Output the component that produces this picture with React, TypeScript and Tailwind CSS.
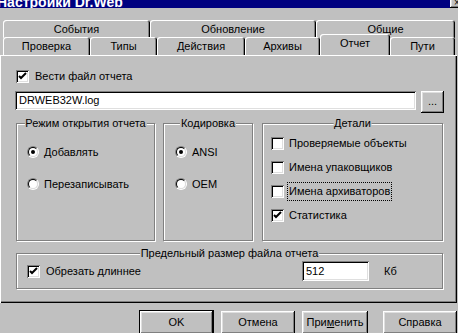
const raised =
    "shadow-[inset_-1px_-1px_0_#000,inset_1px_1px_0_#fff,inset_-2px_-2px_0_#808080,inset_2px_2px_0_#dfdfdf]"
const sunken =
    "shadow-[inset_1px_1px_0_#808080,inset_-1px_-1px_0_#fff,inset_2px_2px_0_#000,inset_-2px_-2px_0_#dfdfdf]"

function Check({ on }: { on?: boolean }) {
    return (
        <div className={`flex h-[13px] w-[13px] shrink-0 items-center justify-center bg-white ${sunken}`}>
            {on && (
                <svg width="9" height="9" viewBox="0 0 9 9">
                    <path d="M1 4 L3 6 L8 1" stroke="#000" strokeWidth="2" fill="none" />
                </svg>
            )}
        </div>
    )
}

function Radio({ on }: { on?: boolean }) {
    return (
        <div className="relative h-[12px] w-[12px] shrink-0 rounded-full border border-t-[#808080] border-l-[#808080] border-r-white border-b-white">
            <div className="flex h-full w-full items-center justify-center rounded-full border border-t-black border-l-black border-r-[#dfdfdf] border-b-[#dfdfdf] bg-white">
                {on && <div className="h-[4px] w-[4px] rounded-full bg-black" />}
            </div>
        </div>
    )
}

function Group({ title, className, children }: { title: string; className: string; children?: React.ReactNode }) {
    return (
        <div className={`relative border border-[#808080] shadow-[1px_1px_0_#fff,inset_1px_1px_0_#fff] ${className}`}>
            <span className="absolute -top-[8px] left-1/2 -translate-x-1/2 whitespace-nowrap bg-[#c0c0c0] px-[1px] leading-[14px]">
                {title}
            </span>
            {children}
        </div>
    )
}

function Tab({ label, w, active }: { label: string; w: string; active?: boolean }) {
    return (
        <div
            className={`flex items-center justify-center rounded-t-[3px] bg-[#c0c0c0] shadow-[inset_1px_1px_0_#fff,inset_-1px_0_0_#000,inset_-2px_0_0_#808080] ${w} ${
                active ? "relative z-10 -mt-[2px] h-[21px] pb-[2px]" : "h-[18px]"
            }`}
        >
            {label}
        </div>
    )
}

function Btn({ label, w, def }: { label: React.ReactNode; w: string; def?: boolean }) {
    return (
        <div className={`flex h-[23px] items-center justify-center ${w} ${def ? "outline outline-1 outline-black" : ""} ${raised}`}>
            {label}
        </div>
    )
}

export default function App() {
    return (
        <div className="relative h-[333px] w-[458px] overflow-hidden bg-[#c0c0c0] text-[11px] text-black font-['Liberation_Sans',Arial,sans-serif]">
            {/* title bar, mostly scrolled off */}
            <div className="flex h-[8px] items-end justify-between overflow-hidden bg-[#000080]">
                <span className="-ml-[3px] mb-[-1px] whitespace-nowrap text-[14px] font-bold leading-[14px] text-white">
                    Настройки Dr.Web
                </span>
                <div className={`mr-[-6px] flex h-[14px] w-[14px] items-end justify-center bg-[#c0c0c0] text-[10px] leading-[10px] ${raised}`}>
                    ×
                </div>
            </div>

            <div className="h-[12px]" />

            {/* tabs */}
            <div className="ml-[3px] flex h-[17px]">
                <Tab label="События" w="w-[147px]" />
                <Tab label="Обновление" w="w-[166px]" />
                <Tab label="Общие" w="w-[139px]" />
            </div>
            <div className="ml-[3px] flex h-[18px] items-end">
                <Tab label="Проверка" w="w-[87px]" />
                <Tab label="Типы" w="w-[67px]" />
                <Tab label="Действия" w="w-[88px]" />
                <Tab label="Архивы" w="w-[75px]" />
                <Tab label="Отчет" w="w-[70px]" active />
                <Tab label="Пути" w="w-[65px]" />
            </div>

            {/* page */}
            <div className="h-[248px] w-[457px] pt-[15px] pl-[16px] shadow-[inset_1px_1px_0_#fff,inset_-1px_-1px_0_#000,inset_-2px_-2px_0_#808080]">
                <div className="flex h-[13px] items-center gap-[6px]">
                    <Check on />
                    <span>Вести файл отчета</span>
                </div>

                <div className="mt-[8px] flex items-start">
                    <div className={`ml-[-1px] flex h-[19px] w-[401px] items-center bg-white pl-[4px] ${sunken}`}>
                        DRWEB32W.log
                    </div>
                    <div className={`ml-[5px] flex h-[22px] w-[23px] items-center justify-center pb-[2px] ${raised}`}>...</div>
                </div>

                <div className="mt-[10px] flex">
                    <Group title="Режим открытия отчета" className="h-[118px] w-[139px]">
                        <div className="mt-[22px] ml-[10px] flex flex-col gap-[20px]">
                            <div className="flex h-[12px] items-center gap-[5px]">
                                <Radio on />
                                <span>Добавлять</span>
                            </div>
                            <div className="flex h-[12px] items-center gap-[5px]">
                                <Radio />
                                <span>Перезаписывать</span>
                            </div>
                        </div>
                    </Group>
                    <Group title="Кодировка" className="ml-[8px] h-[118px] w-[90px]">
                        <div className="mt-[22px] ml-[11px] flex flex-col gap-[20px]">
                            <div className="flex h-[12px] items-center gap-[5px]">
                                <Radio on />
                                <span>ANSI</span>
                            </div>
                            <div className="flex h-[12px] items-center gap-[5px]">
                                <Radio />
                                <span>OEM</span>
                            </div>
                        </div>
                    </Group>
                    <Group title="Детали" className="ml-[9px] h-[118px] w-[181px]">
                        <div className="mt-[13px] ml-[8px] flex flex-col gap-[11px]">
                            <div className="flex h-[13px] items-center gap-[5px]">
                                <Check />
                                <span>Проверяемые объекты</span>
                            </div>
                            <div className="flex h-[13px] items-center gap-[5px]">
                                <Check />
                                <span>Имена упаковщиков</span>
                            </div>
                            <div className="flex h-[13px] items-center gap-[4px]">
                                <Check />
                                <span className="px-[1px] outline outline-1 outline-dotted outline-black">Имена архиваторов</span>
                            </div>
                            <div className="flex h-[13px] items-center gap-[5px]">
                                <Check on />
                                <span>Статистика</span>
                            </div>
                        </div>
                    </Group>
                </div>

                <Group title="Предельный размер файла отчета" className="mt-[12px] flex h-[36px] w-[427px] items-center">
                    <div className="ml-[10px] flex items-center gap-[6px]">
                        <Check on />
                        <span>Обрезать длиннее</span>
                    </div>
                    <div className={`ml-[161px] flex h-[20px] w-[67px] items-center bg-white pl-[4px] ${sunken}`}>512</div>
                    <span className="ml-[15px]">Кб</span>
                </Group>
            </div>

            {/* buttons */}
            <div className="mt-[8px] flex">
                <div className="ml-[140px]">
                    <Btn label="OK" w="w-[73px]" def />
                </div>
                <div className="ml-[8px]">
                    <Btn label="Отмена" w="w-[74px]" />
                </div>
                <div className="ml-[7px]">
                    <Btn
                        label={
                            <span>
                                При<span className="underline">м</span>енить
                            </span>
                        }
                        w="w-[66px]"
                    />
                </div>
                <div className="ml-[15px]">
                    <Btn label="Справка" w="w-[74px]" />
                </div>
            </div>
        </div>
    )
}
